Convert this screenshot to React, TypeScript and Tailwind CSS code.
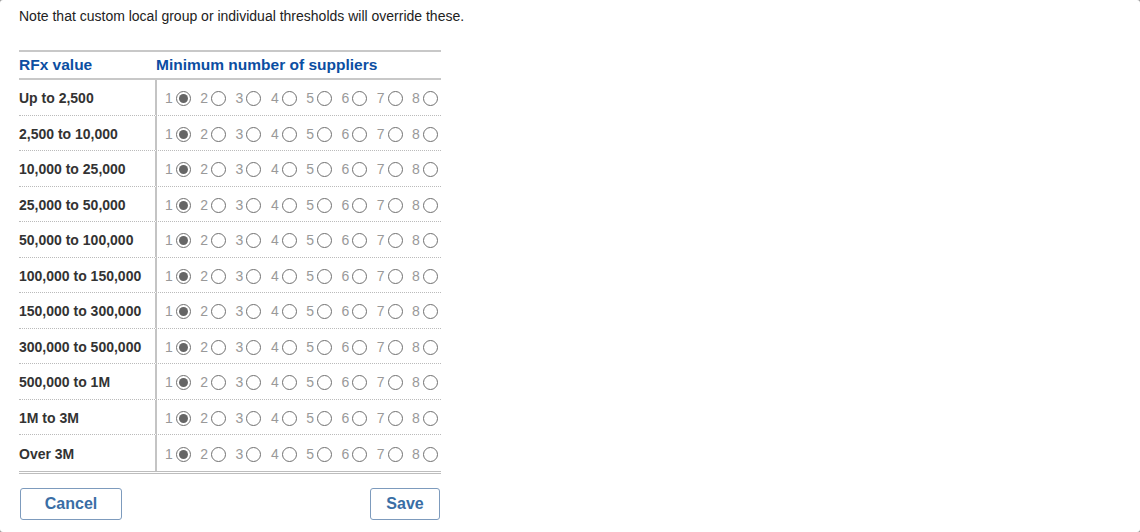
import React from "react";

const rows = [
  "Up to 2,500",
  "2,500 to 10,000",
  "10,000 to 25,000",
  "25,000 to 50,000",
  "50,000 to 100,000",
  "100,000 to 150,000",
  "150,000 to 300,000",
  "300,000 to 500,000",
  "500,000 to 1M",
  "1M to 3M",
  "Over 3M",
];

function Radio({ checked }: { checked: boolean }) {
  return (
    <span className="w-[15px] h-[15px] rounded-full border border-[#707070] bg-white flex items-center justify-center shrink-0">
      {checked && <span className="w-[9px] h-[9px] rounded-full bg-[#666666]" />}
    </span>
  );
}

export default function App() {
  return (
    <div className="w-[1140px] h-[532px] bg-[#9a9a9a]" style={{ fontFamily: '"Liberation Sans", Arial, sans-serif' }}>
      <div className="w-full h-full bg-white rounded-[3px] pt-[7px] pl-[19px]">
        <p className="text-[14px] leading-[18px] text-[#222]">
          Note that custom local group or individual thresholds will override these.
        </p>
        <div className="mt-[25px] w-[422px] border-t-2 border-[#c8c8c8]">
          <div className="flex h-[28px] items-center border-b-2 border-[#c8c8c8] text-[15.5px] font-bold text-[#0b4ea2]">
            <div className="w-[137px] shrink-0">RFx value</div>
            <div>Minimum number of suppliers</div>
          </div>
          <div className="border-b-[3px] border-double border-[#bdbdbd]">
            {rows.map((r, i) => (
              <div
                key={r}
                className={`flex h-[35.5px] ${i < rows.length - 1 ? "border-b border-dotted border-[#bbbbbb]" : ""}`}
              >
                <div className="w-[136px] shrink-0 flex items-center pt-[3px] text-[14px] font-bold text-[#333] whitespace-nowrap">{r}</div>
                <div className="border-l-2 border-[#c4c4c4] flex items-center pl-[8px] pt-[3px] min-w-0">
                  {[1, 2, 3, 4, 5, 6, 7, 8].map((n) => (
                    <span
                      key={n}
                      className={`flex items-center gap-[3px] shrink-0 text-[14px] text-[#999999] ${n < 8 ? "w-[35.3px]" : ""}`}
                    >
                      <span>{n}</span>
                      <Radio checked={n === 1} />
                    </span>
                  ))}
                </div>
              </div>
            ))}
          </div>
        </div>
        <div className="mt-[14px] w-[421px] flex justify-between pl-[1px]">
          <button className="w-[102px] h-[32px] border border-[#7d9bbd] rounded-[3px] text-[16px] font-bold text-[#3a6ea5] bg-white">
            Cancel
          </button>
          <button className="w-[70px] h-[32px] border border-[#7d9bbd] rounded-[3px] text-[16px] font-bold text-[#3a6ea5] bg-white">
            Save
          </button>
        </div>
      </div>
    </div>
  );
}
